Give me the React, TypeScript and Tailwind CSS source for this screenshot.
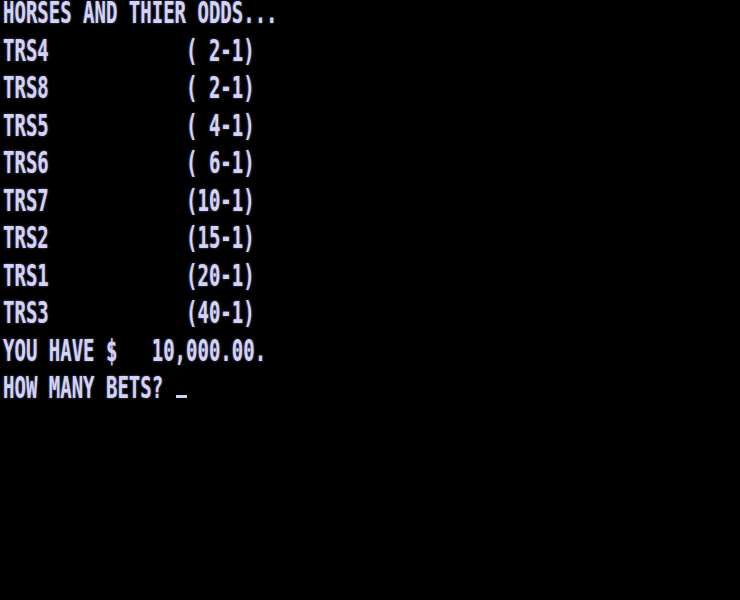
const LINES = [
  "HORSES AND THIER ODDS...",
  "TRS4            ( 2-1)",
  "TRS8            ( 2-1)",
  "TRS5            ( 4-1)",
  "TRS6            ( 6-1)",
  "TRS7            (10-1)",
  "TRS2            (15-1)",
  "TRS1            (20-1)",
  "TRS3            (40-1)",
  "YOU HAVE $   10,000.00.",
];

function Line({ children }: { children: React.ReactNode }) {
  return (
    <div className="h-[37.5px] pl-[3px] whitespace-pre">
      <span className="inline-block origin-top scale-y-[1.58] text-[19px] leading-[19px] font-bold">
        {children}
      </span>
    </div>
  );
}

export default function App() {
  return (
    <div
      className="h-[600px] w-[740px] overflow-hidden bg-black text-[#d2d2fa] [text-shadow:0_0_2px_rgba(200,200,255,0.5)]"
      style={{ fontFamily: '"DejaVu Sans Mono", "Liberation Mono", monospace' }}
    >
      <div className="-mt-[3px]">
        {LINES.map((l, i) => (
          <Line key={i}>{l}</Line>
        ))}
        <div className="relative">
          <Line>HOW MANY BETS? </Line>
          <span className="absolute left-[176px] top-[23px] h-[3px] w-[11px] bg-[#d2d2fa]" />
        </div>
      </div>
    </div>
  );
}
